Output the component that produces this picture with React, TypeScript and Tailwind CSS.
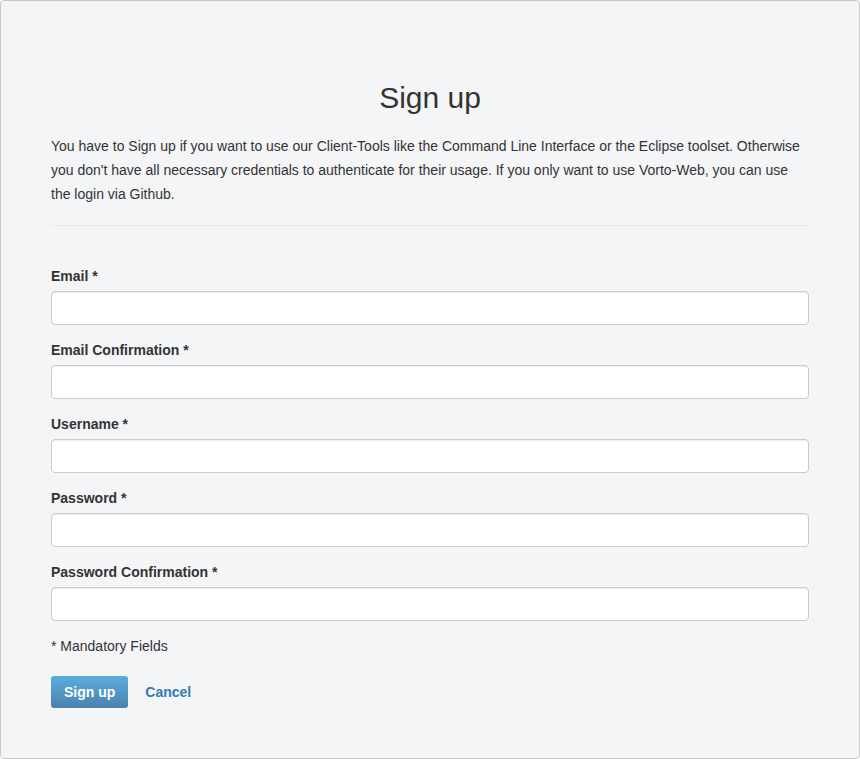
const fields = [
  'Email',
  'Email Confirmation',
  'Username',
  'Password',
  'Password Confirmation',
];

export default function App() {
  return (
    <div className="h-[759px] w-[860px] font-['Liberation_Sans',Arial,sans-serif] text-[14px] text-[#333]">
      <div className="h-full rounded-[4px] border border-[#c8c8c8] bg-[#f4f5f7] px-[50px] pt-[80px]">
        <h2 className="text-center text-[30px] leading-[33px] text-[#333]">Sign up</h2>
        <p className="mt-[20px] leading-[24px]">
          You have to Sign up if you want to use our Client-Tools like the Command Line Interface or the Eclipse toolset. Otherwise
          you don't have all necessary credentials to authenticate for their usage. If you only want to use Vorto-Web, you can use
          the login via Github.
        </p>
        <hr className="mt-[19px] border-t border-[#e8e9eb]" />
        <form className="pt-[40px]" onSubmit={(e) => e.preventDefault()}>
          {fields.map((f) => (
            <div key={f} className="mb-[15px]">
              <label className="mb-[5px] block font-bold leading-[20px]">{f} *</label>
              <input
                type={f.startsWith('Password') ? 'password' : 'text'}
                className="block h-[34px] w-full rounded-[4px] border border-[#ccc] bg-white px-3 shadow-[inset_0_1px_1px_rgba(0,0,0,0.075)] outline-none"
              />
            </div>
          ))}
          <p className="mt-[1px] leading-[20px]">* Mandatory Fields</p>
          <div className="mt-[20px] flex items-center gap-[17px]">
            <button
              type="submit"
              className="h-[32px] rounded-[3px] bg-gradient-to-b from-[#5aaddb] to-[#4a82b0] px-[13px] font-bold text-white"
            >
              Sign up
            </button>
            <a href="#" className="font-bold text-[#337ab7]">
              Cancel
            </a>
          </div>
        </form>
      </div>
    </div>
  );
}
